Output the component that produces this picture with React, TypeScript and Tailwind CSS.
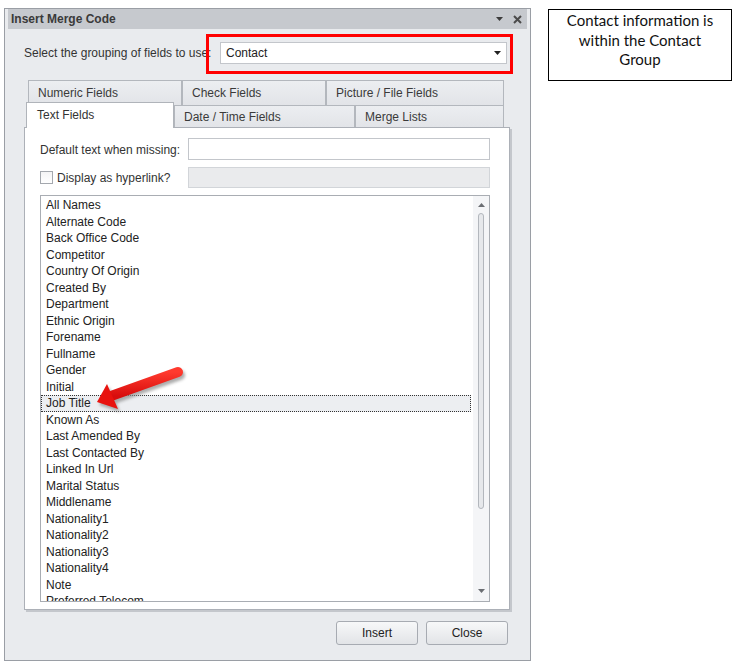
const fields = [
  'All Names',
  'Alternate Code',
  'Back Office Code',
  'Competitor',
  'Country Of Origin',
  'Created By',
  'Department',
  'Ethnic Origin',
  'Forename',
  'Fullname',
  'Gender',
  'Initial',
  'Job Title',
  'Known As',
  'Last Amended By',
  'Last Contacted By',
  'Linked In Url',
  'Marital Status',
  'Middlename',
  'Nationality1',
  'Nationality2',
  'Nationality3',
  'Nationality4',
  'Note',
  'Preferred Telecom',
];

export default function App() {
  return (
    <div className="relative h-[666px] w-[739px] overflow-hidden bg-white font-['Liberation_Sans',Arial,sans-serif] text-[12px] text-[#2b2b2b]">
      <div className="flex items-start pl-[4px] pt-[8px]">
        {/* Dialog */}
        <div className="flex h-[653px] w-[527px] flex-col border border-[#9a9ea5] bg-[#e9ebee]">
          {/* Title bar */}
          <div className="mx-[3px] flex h-[20px] items-center justify-between bg-[#c6c9ce] pl-[3px] pr-[5px]">
            <span className="text-[12px] font-bold text-[#3a3a3a]">Insert Merge Code</span>
            <div className="flex items-center gap-[10px]">
              <svg width="7" height="4" viewBox="0 0 7 4">
                <polygon points="0,0 7,0 3.5,4" fill="#3c3c3c" />
              </svg>
              <svg width="9" height="9" viewBox="0 0 9 9">
                <path d="M1 1 L8 8 M8 1 L1 8" stroke="#4b4b4b" strokeWidth="2" />
              </svg>
            </div>
          </div>

          {/* Grouping row */}
          <div className="mt-[13px] flex h-[22px] items-center pl-[19px]">
            <span className="w-[196px] whitespace-nowrap text-[#333]">Select the grouping of fields to use:</span>
            <div className="flex h-[22px] w-[287px] items-center justify-between border border-[#c3c6cb] bg-white pl-[5px] pr-[5px]">
              <span className="text-[#222]">Contact</span>
              <svg width="7" height="4" viewBox="0 0 7 4">
                <polygon points="0,0 7,0 3.5,4" fill="#222" />
              </svg>
            </div>
          </div>

          {/* Tabs */}
          <div className="ml-[19px] mt-[16px] w-[486px]">
            <div className="flex h-[25px] pl-[4px]">
              <Tab label="Numeric Fields" w="w-[154px]" />
              <Tab label="Check Fields" w="w-[144px]" />
              <Tab label="Picture / File Fields" w="w-[178px]" />
            </div>
            <div className="flex h-[22px] pl-[2px]">
              <div className="relative z-10 -mt-[3px] flex h-[26px] w-[148px] items-center border border-b-0 border-[#b0b4ba] bg-white pb-[2px] pl-[10px] text-[#333]">
                Text Fields
              </div>
              <Tab label="Date / Time Fields" w="w-[181px]" />
              <Tab label="Merge Lists" w="w-[149px]" />
            </div>

            {/* Tab page */}
            <div className="h-[483px] border border-[#acb0b7] bg-white pl-[15px] pt-[10px] shadow-[2px_2px_0_#c4c7cc]">
              <div className="flex h-[22px] items-center">
                <span className="w-[148px] pt-[2px] text-[#333]">Default text when missing:</span>
                <div className="h-[22px] w-[302px] border border-[#c3c6cb] bg-white" />
              </div>
              <div className="mt-[7px] flex h-[21px] items-center">
                <div className="flex w-[148px] items-center gap-[4px]">
                  <span className="h-[13px] w-[13px] border border-[#a4a8ae] bg-gradient-to-b from-[#f4f4f5] to-white" />
                  <span className="text-[#333]">Display as hyperlink?</span>
                </div>
                <div className="h-[21px] w-[302px] border border-[#d2d5d9] bg-[#eaebed]" />
              </div>

              {/* List box */}
              <div className="mt-[7px] flex h-[407px] w-[450px] border border-[#a9adb3] bg-white">
                <div className="h-full flex-1 overflow-hidden pr-[2px] pt-[1px]">
                  {fields.map((f) => (
                    <div
                      key={f}
                      className={
                        f === 'Job Title'
                          ? 'h-[16.5px] border border-dotted border-[#333] bg-[#eceef1] pl-[4px] leading-[14.5px] text-[#222]'
                          : 'h-[16.5px] border border-transparent pl-[4px] leading-[14.5px] text-[#222]'
                      }
                    >
                      {f}
                    </div>
                  ))}
                </div>
                <div className="flex h-full w-[16px] flex-col items-center bg-[#f4f5f7] pt-[7px]">
                  <svg width="7" height="4" viewBox="0 0 7 4">
                    <polygon points="0,4 7,4 3.5,0" fill="#6b6e73" />
                  </svg>
                  <div className="mt-[6px] h-[296px] w-[6px] rounded-full border border-[#b3b7bd] bg-[#e6e8eb]" />
                  <div className="flex-1" />
                  <svg width="7" height="4" viewBox="0 0 7 4" className="mb-[8px]">
                    <polygon points="0,0 7,0 3.5,4" fill="#6b6e73" />
                  </svg>
                </div>
              </div>
            </div>
          </div>

          {/* Buttons */}
          <div className="mt-[11px] flex justify-end gap-[8px] pr-[22px]">
            <Button label="Insert" />
            <Button label="Close" />
          </div>
        </div>

        {/* Note */}
        <div className="ml-[17px] mt-[1px] h-[72px] w-[184px] border border-black pt-[1px] text-center font-['Lato',sans-serif] text-[15px] leading-[19.5px] text-[#111]">
          Contact information is
          <br />
          within the Contact
          <br />
          Group
        </div>
      </div>

      {/* Red highlight round the grouping box */}
      <div className="absolute left-[206px] top-[34px] h-[40px] w-[307px] border-[3px] border-[#ff0000]" />

      {/* Red arrow pointing at Job Title */}
      <svg className="pointer-events-none absolute left-0 top-0" width="739" height="666" viewBox="0 0 739 666">
        <defs>
          <filter id="sh" x="-20%" y="-20%" width="140%" height="140%">
            <feGaussianBlur stdDeviation="1.5" />
          </filter>
          <linearGradient id="rg" x1="0" y1="0" x2="0" y2="1">
            <stop offset="0" stopColor="#ff3a2e" />
            <stop offset="1" stopColor="#d80d0d" />
          </linearGradient>
        </defs>
        <g transform="translate(2 3)" fill="#8a8a8a" stroke="#8a8a8a" filter="url(#sh)" opacity="0.7">
          <line x1="111" y1="396" x2="178" y2="372" strokeWidth="10" strokeLinecap="round" />
          <polygon points="97,402 107,384 118,409" strokeWidth="0" />
        </g>
        <line x1="111" y1="396" x2="178" y2="372" stroke="url(#rg)" strokeWidth="10" strokeLinecap="round" />
        <polygon points="97,402 107,384 118,409" fill="#e8130f" />
      </svg>
    </div>
  );
}

function Tab({ label, w }: { label: string; w: string }) {
  return (
    <div
      className={
        w +
        ' flex h-full items-center border border-b-0 border-[#b3b7bd] bg-gradient-to-b from-[#eceef1] to-[#e2e4e8] pl-[9px] text-[#3a3a3a]'
      }
    >
      {label}
    </div>
  );
}

function Button({ label }: { label: string }) {
  return (
    <button className="h-[24px] w-[82px] rounded-[3px] border border-[#a7abb2] bg-gradient-to-b from-[#f7f8f9] to-[#e2e4e7] text-[12px] text-[#222]">
      {label}
    </button>
  );
}
